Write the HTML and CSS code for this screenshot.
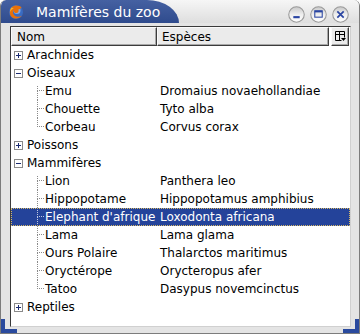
FILE: index.html
```html
<!DOCTYPE html>
<html lang="fr">
  <head>
    <meta charset="UTF-8" />
    <title>Mamifères du zoo</title>
    <link rel="stylesheet" href="styles.css">
  </head>
  <body>
    <div class="window">
      <div class="titlebar">
        <div class="tab">
          <svg class="app-icon" width="16" height="16" viewBox="0 0 16 16">
            <circle cx="8" cy="8" r="7" fill="#3a6cc2" />
            <circle cx="9" cy="6.5" r="3.5" fill="#7fa6e0" />
            <path d="M13.5 3.5C11.5 1.2 6.2 0.8 3.6 3.4C1 6 1.3 11 4 13.2C6.6 15.3 11.4 15 13.8 11.8C11.6 13.2 8.2 13 6.3 11.2C4.6 9.6 4.6 7.2 6 5.9C5.4 7.6 6.6 9.2 8.3 9.1C10.2 9 11.2 7.2 10.3 5.6C11.8 5.2 12.9 4.6 13.5 3.5Z" fill="#e8700a" />
            <path d="M3.6 3.4C2.4 4.6 2 6.3 2.2 8C3 6.2 4.3 5 5.8 4.6C5 4.2 4.2 3.8 3.6 3.4Z" fill="#f6b030" />
          </svg>
          <span class="title">Mamifères du zoo</span>
        </div>
        <div class="buttons">
          <svg class="wbtn" width="17" height="17" viewBox="0 0 16 16">
            <circle cx="8" cy="8" r="7.3" fill="url(#btn)" stroke="#9a9a9a" />
            <rect x="5" y="9.5" width="6" height="2" fill="#2a45a2" />
          </svg>
          <svg class="wbtn" width="17" height="17" viewBox="0 0 16 16">
            <circle cx="8" cy="8" r="7.3" fill="url(#btn)" stroke="#9a9a9a" />
            <rect x="4.5" y="4.5" width="7" height="6" fill="none" stroke="#2a45a2" />
            <rect x="4.5" y="4.5" width="7" height="1.5" fill="#2a45a2" />
          </svg>
          <svg class="wbtn" width="17" height="17" viewBox="0 0 16 16">
            <defs>
              <linearGradient id="btn" x1="0" y1="0" x2="0" y2="1">
                <stop offset="0" stop-color="#c8c8c8" />
                <stop offset="0.5" stop-color="#eeeeee" />
                <stop offset="1" stop-color="#ffffff" />
              </linearGradient>
            </defs>
            <circle cx="8" cy="8" r="7.3" fill="url(#btn)" stroke="#9a9a9a" />
            <path d="M5 5L11 11M11 5L5 11" stroke="#2a45a2" stroke-width="1.6" />
          </svg>
        </div>
      </div>

      <div class="frame">
        <div class="tree">
          <div class="header">
            <div class="hcell col-name">Nom</div>
            <div class="hcell col-species">Espèces</div>
            <div class="hcell picker">
              <svg width="11" height="11" viewBox="0 0 11 11">
                <path d="M0.5 0.5H9.5V6.5M0.5 0.5V9.5H6.5M0.5 3.5H9.5M4.5 0.5V9.5" fill="none" stroke="#000" />
                <path d="M6 7H11L8.5 10Z" fill="#000" />
              </svg>
            </div>
          </div>

          <div id="rows"></div>
        </div>
      </div>

      <div class="grip grip-left"></div>
      <div class="grip grip-right"></div>
    </div>

    <script>
      const groups = [
        { name: "Arachnides", open: false, items: [] },
        {
          name: "Oiseaux",
          open: true,
          items: [
            ["Emu", "Dromaius novaehollandiae"],
            ["Chouette", "Tyto alba"],
            ["Corbeau", "Corvus corax"],
          ],
        },
        { name: "Poissons", open: false, items: [] },
        {
          name: "Mammifères",
          open: true,
          items: [
            ["Lion", "Panthera leo"],
            ["Hippopotame", "Hippopotamus amphibius"],
            ["Elephant d'afrique", "Loxodonta africana"],
            ["Lama", "Lama glama"],
            ["Ours Polaire", "Thalarctos maritimus"],
            ["Oryctérope", "Orycteropus afer"],
            ["Tatoo", "Dasypus novemcinctus"],
          ],
        },
        { name: "Reptiles", open: false, items: [] },
      ];

      const selected = "Elephant d'afrique";
      const rows = document.getElementById("rows");

      function expander(open) {
        const sign = open ? "M2 4.5H7" : "M2 4.5H7M4.5 2V7";
        return (
          '<svg class="expander" width="9" height="9" viewBox="0 0 9 9">' +
          '<rect x="0.5" y="0.5" width="8" height="8" fill="#fff" stroke="#8a8a8a"/>' +
          '<path d="' + sign + '" stroke="#1a2a70"/></svg>'
        );
      }

      groups.forEach((group) => {
        const row = document.createElement("div");
        row.className = "row";
        row.innerHTML =
          '<div class="cell col-name level0">' + expander(group.open) +
          "<span>" + group.name + "</span></div><div class=\"cell\"></div>";
        rows.appendChild(row);

        if (!group.open) return;

        group.items.forEach((item, i) => {
          const child = document.createElement("div");
          child.className = "row";
          if (item[0] === selected) child.classList.add("selected");
          let branch = "branch";
          if (i === 0) branch += " first";
          if (i === group.items.length - 1) branch += " last";
          child.innerHTML =
            '<div class="cell col-name level1"><span class="' + branch +
            '"><i class="top"></i><i class="bottom"></i></span><span>' +
            item[0] + '</span></div><div class="cell col-species">' +
            item[1] + "</div>";
          rows.appendChild(child);
        });
      });
    </script>
  </body>
</html>
```

FILE: styles.css
```css
body {
  margin: 0;
  background: #ffffff;
  font-family: "DejaVu Sans", sans-serif;
  font-size: 12px;
}

.window {
  position: relative;
  width: 360px;
  height: 334px;
  box-sizing: border-box;
  display: flex;
  flex-direction: column;
  background: #e4e4e4;
  border: 1px solid #7c7c7c;
  border-top: none;
  border-radius: 6px 6px 0 0;
  overflow: hidden;
}

.titlebar {
  height: 23px;
  flex: none;
  display: flex;
  align-items: center;
  justify-content: space-between;
  background: linear-gradient(#f6f6f6, #dedede);
}

.tab {
  align-self: stretch;
  width: 178px;
  display: flex;
  align-items: center;
  gap: 12px;
  padding-left: 7px;
  box-sizing: border-box;
  background: linear-gradient(#4561a2, #2f4b8d);
  border-top-right-radius: 32px 23px;
  border-top-left-radius: 5px;
}

.title {
  color: #ffffff;
  font-size: 14px;
}

.buttons {
  display: flex;
  gap: 5px;
  padding-right: 10px;
  padding-top: 5px;
}

.frame {
  flex: 1;
  display: flex;
  padding: 3px 8px 6px 9px;
  min-height: 0;
}

.tree {
  flex: 1;
  background: #ffffff;
  border: 1px solid #3a3a3a;
  border-right-color: #d0d0d0;
  border-bottom-color: #d0d0d0;
}

.header {
  display: flex;
  height: 19px;
}

.hcell {
  box-sizing: border-box;
  height: 19px;
  display: flex;
  align-items: center;
  background: #ebebeb;
  border: 1px solid #3c3c3c;
  border-top-color: #fafafa;
  border-left-color: #fafafa;
  box-shadow: inset -1px -1px 0 #a8a8a8;
  color: #000000;
}

.header .col-name {
  width: 146px;
  padding-left: 5px;
}

.header .col-species {
  width: 172px;
  padding-left: 4px;
}

.picker {
  width: 18px;
  margin-left: 2px;
  justify-content: center;
}

.row {
  display: flex;
  height: 18px;
  line-height: 18px;
  color: #000000;
  white-space: nowrap;
}

.row .col-name {
  width: 146px;
  box-sizing: border-box;
  display: flex;
  align-items: center;
}

.row .col-species {
  padding-left: 3px;
}

.level0 {
  padding-left: 3px;
  gap: 4px;
}

.level1 {
  padding-left: 26px;
}

.branch {
  width: 7px;
  height: 18px;
  margin-right: 1px;
  display: flex;
  flex-direction: column;
}

.branch i {
  display: block;
  height: 9px;
  border-left: 1px dotted #8a8a8a;
}

.branch .top {
  box-sizing: border-box;
  border-bottom: 1px dotted #8a8a8a;
}

.branch.first .top {
  margin-top: 4px;
  height: 5px;
}

.branch.last .bottom {
  border-left: none;
}

.selected {
  background: #24439a;
  color: #ffffff;
  outline: 1px dotted #d6b866;
  outline-offset: -1px;
}

.selected .branch i {
  border-color: #c0c8e0;
}

.grip {
  position: absolute;
  bottom: -1px;
  width: 17px;
  height: 15px;
  box-sizing: border-box;
  border-bottom: 5px solid #2a4a9e;
}

.grip-left {
  left: -1px;
  border-left: 5px solid #2a4a9e;
}

.grip-right {
  right: -1px;
  border-right: 5px solid #2a4a9e;
}
```
